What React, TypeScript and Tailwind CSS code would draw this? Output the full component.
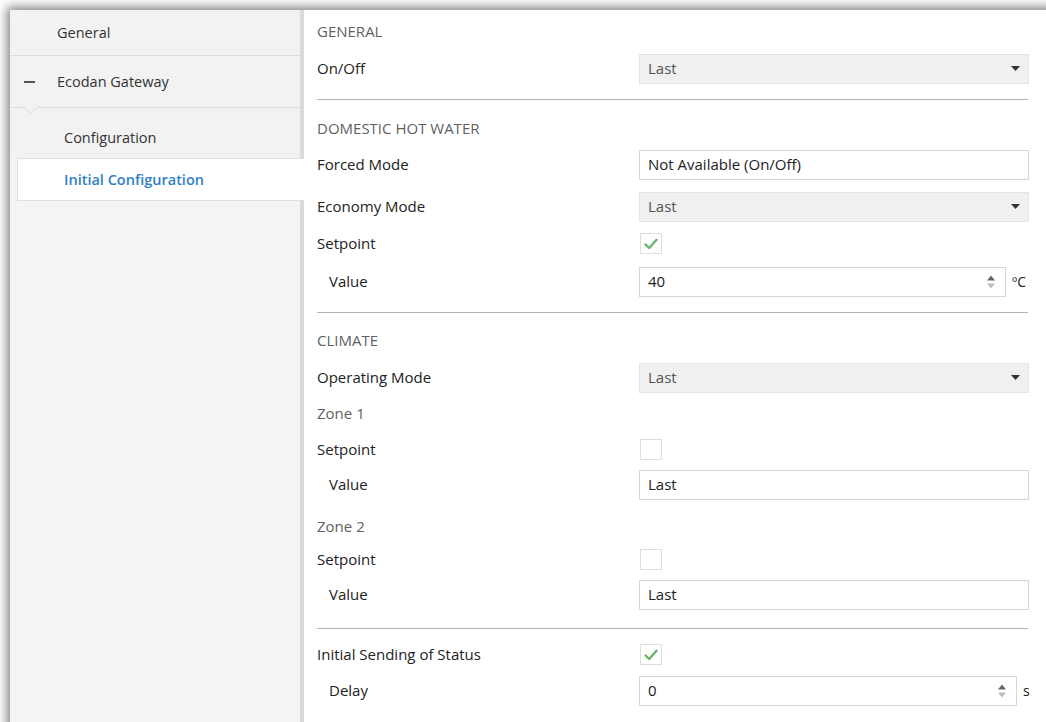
import type { ReactNode } from "react";

const font = { fontFamily: '"Open Sans", "Noto Sans", sans-serif' };

function Caret() {
  return (
    <svg width="9" height="5" viewBox="0 0 9 5" className="shrink-0">
      <path d="M0 0h9L4.5 5z" fill="#333" />
    </svg>
  );
}

function Dropdown({ value }: { value: string }) {
  return (
    <div className="flex h-[30px] w-[390px] items-center justify-between border border-[#e4e4e4] bg-[#f0f0f0] pl-[8px] pr-[8px] text-[15px] text-[#555]">
      <span>{value}</span>
      <Caret />
    </div>
  );
}

function TextField({ value }: { value: string }) {
  return (
    <div className="flex h-[30px] w-[390px] items-center border border-[#d6d6d6] bg-white pl-[8px] text-[15px] text-[#222]">
      {value}
    </div>
  );
}

function Spinner({ value, unit, wide }: { value: string; unit: string; wide?: boolean }) {
  return (
    <div className="flex items-center">
      <div
        className={`flex h-[30px] items-center justify-between border border-[#d6d6d6] bg-white pl-[8px] pr-[10px] text-[15px] text-[#222] ${wide ? "w-[378px]" : "w-[367px]"}`}
      >
        <span>{value}</span>
        <svg width="8" height="16" viewBox="0 0 8 16">
          <path d="M0 6.5L4 1.5L8 6.5z" fill="#666" />
          <path d="M0 9.5L4 14.5L8 9.5z" fill="#bdbdbd" />
        </svg>
      </div>
      <span className="ml-[6px] text-[14px] text-[#222]">{unit}</span>
    </div>
  );
}

function Checkbox({ checked }: { checked?: boolean }) {
  return (
    <div className="ml-[1px] flex h-[21px] w-[22px] items-center justify-center border border-[#dedede] bg-white">
      {checked && (
        <svg width="14" height="12" viewBox="0 0 14 12">
          <path
            d="M1.5 6.5L5.2 10L12.5 1.8"
            fill="none"
            stroke="#6cb36c"
            strokeWidth="2.4"
            strokeLinecap="round"
            strokeLinejoin="round"
          />
        </svg>
      )}
    </div>
  );
}

function Row({
  label,
  indent,
  className,
  children,
}: {
  label: string;
  indent?: boolean;
  className: string;
  children?: ReactNode;
}) {
  return (
    <div className={`flex h-[29px] items-center ${className}`}>
      <div className={`w-[322px] shrink-0 text-[15px] text-[#222] ${indent ? "pl-[12px]" : ""}`}>
        {label}
      </div>
      {children}
    </div>
  );
}

function Heading({ text, className }: { text: string; className: string }) {
  return (
    <div className={`flex h-[29px] items-center text-[15px] text-[#5f5f5f] ${className}`}>
      {text}
    </div>
  );
}

function Divider({ className }: { className: string }) {
  return <div className={`h-px w-[711px] bg-[#b3b3b3] ${className}`} />;
}

function Sidebar() {
  return (
    <aside className="relative flex w-[294px] shrink-0 flex-col bg-[#f4f4f5] text-[14.5px] text-[#333] shadow-[inset_-4px_0_0_#dadada]">
      <div className="flex h-[46px] w-[290px] items-center border-b border-[#dcdcdc] bg-[#f2f2f2] pl-[47px]">
        General
      </div>
      <div className="relative flex h-[52px] w-[290px] items-center border-b border-[#dcdcdc] bg-[#f2f2f2]">
        <span className="ml-[14px] mr-[22px] h-[2px] w-[11px] bg-[#555]" />
        Ecodan Gateway
        {/* little pointer under the expanded group */}
        <svg width="16" height="9" viewBox="0 0 16 9" className="absolute left-[13px] top-[50px]">
          <path d="M0 0L8 7.5L16 0z" fill="#f2f2f2" />
          <path d="M0 0L8 7.5L16 0" fill="none" stroke="#dcdcdc" />
        </svg>
      </div>
      <div className="w-[290px] bg-[#f2f2f2] pt-[10px]">
        <div className="flex h-[40px] items-center pl-[54px]">Configuration</div>
      </div>
      <div className="ml-[7px] flex h-[43px] items-center border border-r-0 border-[#e0e0e0] bg-white pl-[46px] font-semibold text-[#2f7fc4]">
        Initial Configuration
      </div>
    </aside>
  );
}

export default function App() {
  return (
    <div className="h-[722px] w-[1046px] overflow-hidden bg-white pl-[10px] pt-[10px]" style={font}>
      <div className="flex h-[740px] w-[1060px] bg-white shadow-[-3px_-3px_10px_rgba(0,0,0,0.5)]">
        <Sidebar />
        <main className="flex flex-1 flex-col pl-[13px]">
          <Heading text="GENERAL" className="mt-[7px]" />
          <Row label="On/Off" className="mt-[8px]">
            <Dropdown value="Last" />
          </Row>
          <Divider className="mt-[16px]" />

          <Heading text="DOMESTIC HOT WATER" className="mt-[14px]" />
          <Row label="Forced Mode" className="mt-[7px]">
            <TextField value="Not Available (On/Off)" />
          </Row>
          <Row label="Economy Mode" className="mt-[13px]">
            <Dropdown value="Last" />
          </Row>
          <Row label="Setpoint" className="mt-[8px]">
            <Checkbox checked />
          </Row>
          <Row label="Value" indent className="mt-[9px]">
            <Spinner value="40" unit="ºC" />
          </Row>
          <Divider className="mt-[16px]" />

          <Heading text="CLIMATE" className="mt-[13px]" />
          <Row label="Operating Mode" className="mt-[8px]">
            <Dropdown value="Last" />
          </Row>
          <Heading text="Zone 1" className="mt-[7px]" />
          <Row label="Setpoint" className="mt-[7px]">
            <Checkbox />
          </Row>
          <Row label="Value" indent className="mt-[6px]">
            <TextField value="Last" />
          </Row>
          <Heading text="Zone 2" className="mt-[13px]" />
          <Row label="Setpoint" className="mt-[4px]">
            <Checkbox />
          </Row>
          <Row label="Value" indent className="mt-[6px]">
            <TextField value="Last" />
          </Row>
          <Divider className="mt-[19px]" />

          <Row label="Initial Sending of Status" className="mt-[11px]">
            <Checkbox checked />
          </Row>
          <Row label="Delay" indent className="mt-[7px]">
            <Spinner value="0" unit="s" wide />
          </Row>
        </main>
      </div>
    </div>
  );
}
